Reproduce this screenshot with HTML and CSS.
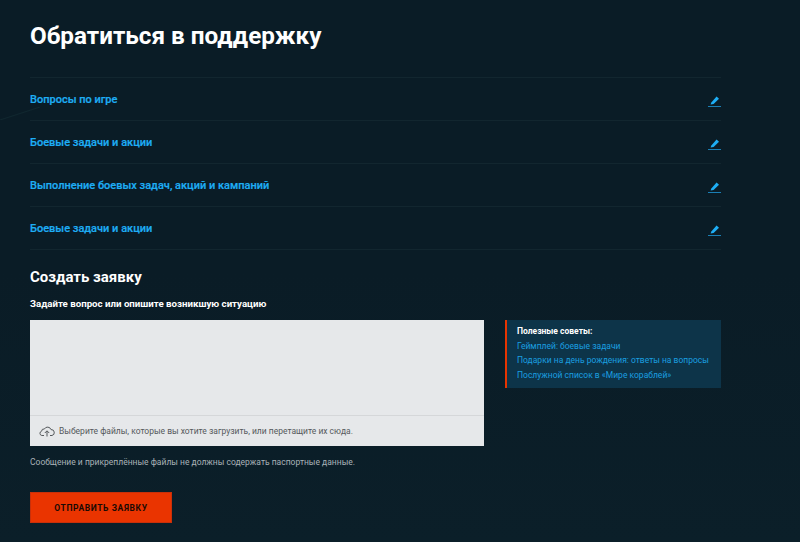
FILE: index.html
```html
<!DOCTYPE html>
<html lang="ru">
<head>
    <meta charset="UTF-8">
    <title>Обратиться в поддержку</title>
    <link rel="stylesheet" href="styles.css">
</head>
<body>
    <div class="container">
        <h1>Обратиться в поддержку</h1>

        <div class="topics">
            <div class="topic">
                <a href="#">Вопросы по игре</a>
                <svg class="edit-icon" width="13" height="11" viewBox="0 0 13 11"><path d="M2.6 8.6l.7-2.2L8.6.6l2.4 2.2-5.4 5.2z" fill="#1eaef5"/><path d="M0 10.5h13" stroke="#1a7fb5"/></svg>
            </div>
            <div class="topic">
                <a href="#">Боевые задачи и акции</a>
                <svg class="edit-icon" width="13" height="11" viewBox="0 0 13 11"><path d="M2.6 8.6l.7-2.2L8.6.6l2.4 2.2-5.4 5.2z" fill="#1eaef5"/><path d="M0 10.5h13" stroke="#1a7fb5"/></svg>
            </div>
            <div class="topic">
                <a href="#">Выполнение боевых задач, акций и кампаний</a>
                <svg class="edit-icon" width="13" height="11" viewBox="0 0 13 11"><path d="M2.6 8.6l.7-2.2L8.6.6l2.4 2.2-5.4 5.2z" fill="#1eaef5"/><path d="M0 10.5h13" stroke="#1a7fb5"/></svg>
            </div>
            <div class="topic">
                <a href="#">Боевые задачи и акции</a>
                <svg class="edit-icon" width="13" height="11" viewBox="0 0 13 11"><path d="M2.6 8.6l.7-2.2L8.6.6l2.4 2.2-5.4 5.2z" fill="#1eaef5"/><path d="M0 10.5h13" stroke="#1a7fb5"/></svg>
            </div>
        </div>

        <h2>Создать заявку</h2>
        <p class="field-label">Задайте вопрос или опишите возникшую ситуацию</p>

        <div class="form-row">
            <div class="message-box">
                <div class="message-input"></div>
                <div class="upload">
                    <svg width="16" height="12" viewBox="0 0 16 12" fill="none" stroke="#55595c"><path d="M5 10.5H2.8A2.2 2.2 0 0 1 2.6 6.2 2.4 2.4 0 0 1 5.4 4 3.6 3.6 0 0 1 12 4.6a3 3 0 0 1 1 5.9h-2"/><path d="M8 11.5V6M5.8 8L8 5.8 10.2 8"/></svg>
                    <span>Выберите файлы, которые вы хотите загрузить, или перетащите их сюда.</span>
                </div>
            </div>
            <div class="tips">
                <b>Полезные советы:</b>
                <a href="#">Геймплей: боевые задачи</a>
                <a href="#">Подарки на день рождения: ответы на вопросы</a>
                <a href="#">Послужной список в «Мире кораблей»</a>
            </div>
        </div>

        <p class="note">Сообщение и прикреплённые файлы не должны содержать паспортные данные.</p>
        <button class="send-btn">Отправить заявку</button>
    </div>
</body>
</html>
```

FILE: styles.css
```css
html, body {
    height: 100%;
}

body {
    margin: 0;
    font-family: Roboto, Arial, sans-serif;
    background-color: #0a1c26;
    background-image:
        linear-gradient(to bottom right, transparent 46%, #10272f 50%, transparent 54%),
        linear-gradient(180deg, #0a1c26 0, #0a1c26 50%, #0b1f29 100%);
    background-size: 40px 13px, 100% 100%;
    background-position: 0 107px, 0 0;
    background-repeat: no-repeat;
    color: white;
    overflow: hidden;
}

.container {
    width: 691px;
    margin-left: 30px;
    padding-top: 20px;
}

h1 {
    margin: 0;
    font-size: 24.25px;
    line-height: 33px;
    font-weight: 700;
}

.topics {
    margin-top: 24px;
    border-top: 1px solid #12262f;
}

.topic {
    display: flex;
    justify-content: space-between;
    align-items: center;
    height: 42px;
    border-bottom: 1px solid #12262f;
}

.topic a {
    color: #1eaef5;
    font-size: 11px;
    font-weight: 500;
    text-decoration: none;
    -webkit-text-stroke: 0.2px #1eaef5;
}

.edit-icon {
    margin-top: 4px;
}

h2 {
    margin: 16px 0 0;
    font-size: 15px;
    line-height: 22px;
    font-weight: 700;
}

.field-label {
    margin: 9px 0 0;
    font-size: 9.7px;
    line-height: 14px;
    font-weight: 700;
}

.form-row {
    display: flex;
    justify-content: space-between;
    align-items: flex-start;
    margin-top: 9px;
}

.message-box {
    width: 454px;
    background-color: #e6e8ea;
}

.message-input {
    height: 95px;
    border-bottom: 1px solid #d5d7d9;
}

.upload {
    display: flex;
    align-items: center;
    gap: 4px;
    height: 30px;
    padding-left: 9px;
    color: #55595c;
    font-size: 8.5px;
}

.tips {
    display: flex;
    flex-direction: column;
    width: 204px;
    height: 68px;
    padding-left: 10px;
    background-color: #0d3449;
    border-left: 2px solid #e83400;
    font-size: 8.5px;
    line-height: 14.5px;
}

.tips b {
    margin-top: 4px;
    color: white;
}

.tips a {
    color: #1a9fe0;
    text-decoration: none;
}

.note {
    margin: 9px 0 0;
    color: #a9b2b7;
    font-size: 8.5px;
    line-height: 14px;
}

.send-btn {
    display: block;
    width: 142px;
    height: 31px;
    margin-top: 23px;
    padding: 0;
    border: 1px solid #c9300a;
    background-color: #ea3400;
    color: #1a0a04;
    font-family: inherit;
    font-size: 8.5px;
    font-weight: 700;
    letter-spacing: 0.6px;
    text-transform: uppercase;
}
```
